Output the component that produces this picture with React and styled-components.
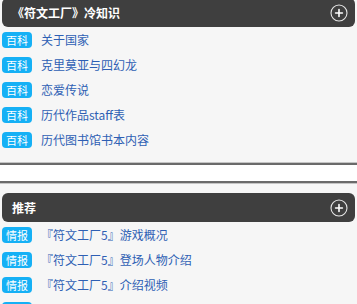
import React from 'react';
import styled, { createGlobalStyle } from 'styled-components';

const GlobalStyle = createGlobalStyle`
  html, body {
    margin: 0;
    padding: 0;
    background: #f6f6f6;
  }
  body {
    font-family: "Noto Sans CJK SC", "Noto Sans", sans-serif;
    overflow: hidden;
  }
`;

const sections = [
  {
    title: '《符文工厂》冷知识',
    tag: '百科',
    items: ['关于国家', '克里莫亚与四幻龙', '恋爱传说', '历代作品staff表', '历代图书馆书本内容'],
  },
  {
    title: '推荐',
    tag: '情报',
    items: [
      '『符文工厂5』游戏概况',
      '『符文工厂5』登场人物介绍',
      '『符文工厂5』介绍视频',
      '『符文工厂5』系统介绍',
    ],
  },
];

const PlusIcon = () => (
  <svg width="18" height="18" viewBox="0 0 18 18">
    <circle cx="9" cy="9" r="8" fill="none" stroke="#e6e6e6" strokeWidth="1.1" />
    <path d="M9 5.6v6.8M5.6 9h6.8" stroke="#ffffff" strokeWidth="1.6" strokeLinecap="round" />
  </svg>
);

const App = () => (
  <>
    <GlobalStyle />
    <Page>
      {sections.map((section, index) => (
        <React.Fragment key={section.title}>
          {index > 0 && <Divider />}
          <Section>
            <Header>
              <HeaderTitle>{section.title}</HeaderTitle>
              <PlusIcon />
            </Header>
            <List>
              {section.items.map((item) => (
                <Row key={item}>
                  <Tag>{section.tag}</Tag>
                  <Link>{item}</Link>
                </Row>
              ))}
            </List>
          </Section>
        </React.Fragment>
      ))}
    </Page>
  </>
);

export default App;

const Page = styled.div`
  display: flex;
  flex-direction: column;
  margin-top: -2px;
`;

const Section = styled.section`
  display: flex;
  flex-direction: column;
  padding: 0 2px;
`;

const Header = styled.div`
  display: flex;
  align-items: center;
  justify-content: space-between;
  height: 29px;
  padding: 0 7px 0 10px;
  background: #3f3f3f;
  border-radius: 6px;
`;

const HeaderTitle = styled.span`
  color: #ffffff;
  font-size: 12px;
  font-weight: bold;
  line-height: 29px;
`;

const List = styled.ul`
  margin: 0;
  padding: 0;
  list-style: none;
`;

const Row = styled.li`
  display: flex;
  align-items: center;
  height: 25px;
`;

const Tag = styled.span`
  display: inline-block;
  height: 16px;
  padding: 0 4px;
  border-radius: 4px;
  background: #15b0f5;
  color: #ffffff;
  font-size: 11px;
  line-height: 16px;
`;

const Link = styled.a`
  margin-left: 9px;
  color: #2e5fb4;
  font-size: 12px;
  white-space: nowrap;
`;

const Divider = styled.div`
  height: 16px;
  margin: 11px 0 10px;
  background: #ffffff;
  border-top: 2px solid #6a6a6a;
  border-bottom: 2px solid #6a6a6a;
  box-shadow: 0 -1px 0 #c4c4c4, 0 1px 0 #c4c4c4;
`;
